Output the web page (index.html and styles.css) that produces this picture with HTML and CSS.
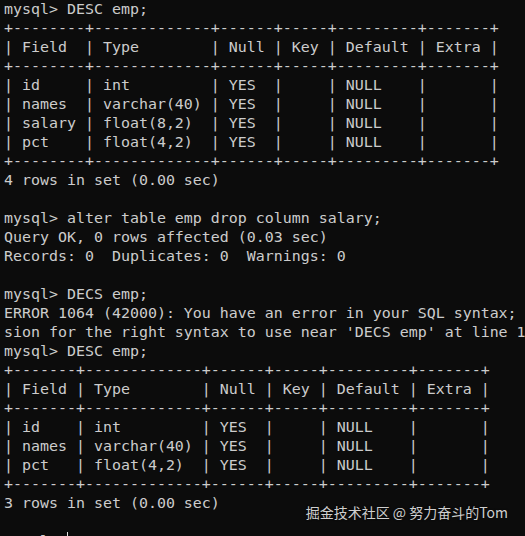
FILE: index.html
```html
<!DOCTYPE html>
<html>
<head>
<meta charset="utf-8">
<link rel="stylesheet" href="styles.css">
</head>
<body>
<div class="term">
<pre class="out">mysql&gt; DESC emp;
+--------+-------------+------+-----+---------+-------+
| Field  | Type        | Null | Key | Default | Extra |
+--------+-------------+------+-----+---------+-------+
| id     | int         | YES  |     | NULL    |       |
| names  | varchar(40) | YES  |     | NULL    |       |
| salary | float(8,2)  | YES  |     | NULL    |       |
| pct    | float(4,2)  | YES  |     | NULL    |       |
+--------+-------------+------+-----+---------+-------+
4 rows in set (0.00 sec)

mysql&gt; alter table emp drop column salary;
Query OK, 0 rows affected (0.03 sec)
Records: 0  Duplicates: 0  Warnings: 0

mysql&gt; DECS emp;
ERROR 1064 (42000): You have an error in your SQL syntax;
sion for the right syntax to use near 'DECS emp' at line 1
mysql&gt; DESC emp;
+-------+-------------+------+-----+---------+-------+
| Field | Type        | Null | Key | Default | Extra |
+-------+-------------+------+-----+---------+-------+
| id    | int         | YES  |     | NULL    |       |
| names | varchar(40) | YES  |     | NULL    |       |
| pct   | float(4,2)  | YES  |     | NULL    |       |
+-------+-------------+------+-----+---------+-------+
3 rows in set (0.00 sec)

mysql&gt; <span class="cursor"></span></pre>
<div class="watermark">掘金技术社区 @ 努力奋斗的Tom</div>
</div>
</body>
</html>
```
FILE: styles.css
```css
html, body {
  margin: 0;
  padding: 0;
  background: #0c0c0c;
  overflow: hidden;
}
.term {
  position: relative;
  width: 525px;
  height: 536px;
  overflow: hidden;
  background: #0c0c0c;
}
.out {
  margin: 0;
  padding: 0 0 0 4px;
  font-family: "DejaVu Sans Mono", "Liberation Mono", monospace;
  font-size: 14.95px;
  line-height: 19px;
  color: #cccccc;
  white-space: pre;
}
.cursor {
  display: inline-block;
  width: 1px;
  height: 17px;
  background: #e0e0e0;
  vertical-align: -3px;
}
.watermark {
  position: absolute;
  right: 17px;
  bottom: 15px;
  font-family: "Noto Sans CJK SC", "Noto Sans", sans-serif;
  font-size: 14px;
  line-height: 18px;
  color: #cfcfcf;
  text-shadow: 0 0 2px rgba(0,0,0,0.6);
}
```
